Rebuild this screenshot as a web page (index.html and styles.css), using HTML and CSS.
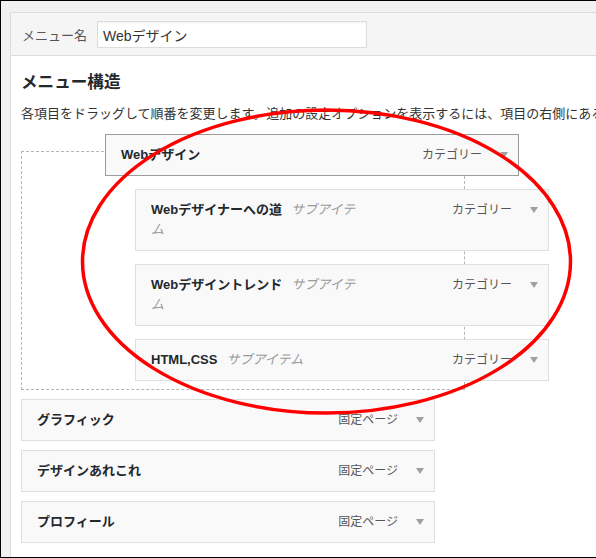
FILE: index.html
```html
<!DOCTYPE html>
<html lang="ja">
<head>
<meta charset="utf-8">
<title>メニュー構造</title>
<link rel="stylesheet" href="styles.css">
</head>
<body>
<div class="frame">
  <div class="panel">
    <div class="header">
      <span class="name-label">メニュー名</span>
      <input class="name-input" type="text" value="Webデザイン">
    </div>
    <div class="body">
      <h3 class="heading">メニュー構造</h3>
      <p class="desc">各項目をドラッグして順番を変更します。追加の設定オプションを表示するには、項目の右側にある矢印をクリックしてください。</p>
      <div class="menu">
        <div class="placeholder"></div>
        <div class="drag-helper">
          <div class="item helper">
            <div class="title-wrap"><span class="title">Webデザイン</span></div>
            <div class="controls"><span class="type">カテゴリー</span><span class="arrow"></span></div>
          </div>
          <div class="children">
            <div class="item">
              <div class="title-wrap narrow"><span class="title">Webデザイナーへの道</span><span class="sub">サブアイテム</span></div>
              <div class="controls"><span class="type">カテゴリー</span><span class="arrow"></span></div>
            </div>
            <div class="item">
              <div class="title-wrap narrow"><span class="title">Webデザイントレンド</span><span class="sub">サブアイテム</span></div>
              <div class="controls"><span class="type">カテゴリー</span><span class="arrow"></span></div>
            </div>
            <div class="item">
              <div class="title-wrap narrow"><span class="title">HTML,CSS</span><span class="sub">サブアイテム</span></div>
              <div class="controls"><span class="type">カテゴリー</span><span class="arrow"></span></div>
            </div>
          </div>
        </div>
        <div class="item">
          <div class="title-wrap"><span class="title">グラフィック</span></div>
          <div class="controls"><span class="type">固定ページ</span><span class="arrow"></span></div>
        </div>
        <div class="item">
          <div class="title-wrap"><span class="title">デザインあれこれ</span></div>
          <div class="controls"><span class="type">固定ページ</span><span class="arrow"></span></div>
        </div>
        <div class="item">
          <div class="title-wrap"><span class="title">プロフィール</span></div>
          <div class="controls"><span class="type">固定ページ</span><span class="arrow"></span></div>
        </div>
      </div>
    </div>
  </div>
  <svg class="annotation" width="596" height="558" viewBox="0 0 596 558">
    <ellipse cx="326.5" cy="261.5" rx="244" ry="151.5" fill="none" stroke="#ff0000" stroke-width="3.5"/>
  </svg>
</div>
</body>
</html>
```

FILE: styles.css
```css
* { box-sizing: border-box; }

html, body {
  margin: 0;
  padding: 0;
  background: #fff;
}

body {
  font-family: "Liberation Sans", "Noto Sans CJK JP", sans-serif;
  color: #333;
}

.frame {
  position: relative;
  width: 596px;
  height: 558px;
  border: 1px solid #000;
  border-right: none;
  background: #f1f1f1;
  padding: 11px 0 0 9px;
  display: flex;
  overflow: hidden;
}

.panel {
  flex: 1;
  background: #fff;
  border-top: 1px solid #dcdcdc;
  border-left: 1px solid #dcdcdc;
  display: flex;
  flex-direction: column;
  min-width: 0;
}

.header {
  height: 43px;
  background: #f5f5f5;
  border-bottom: 1px solid #dcdcdc;
  padding: 8px 11px 7px 11px;
  display: flex;
  align-items: center;
  gap: 11px;
}

.name-label {
  font-size: 13px;
  color: #555;
  width: 64px;
  white-space: nowrap;
}

.name-input {
  width: 270px;
  height: 27px;
  border: 1px solid #dcdcdc;
  background: #fff;
  padding: 0 5px;
  margin: 0;
  font-family: "Liberation Sans", "Noto Sans CJK JP", sans-serif;
  font-size: 14px;
  color: #333;
  box-shadow: inset 0 1px 2px rgba(0,0,0,0.06);
  outline: none;
}

.body {
  padding: 0 10px;
}

.heading {
  margin: 15px 0 0 0;
  font-size: 16.6px;
  line-height: 24px;
  font-weight: bold;
  color: #23282d;
}

.desc {
  margin: 9px 0 0 0;
  font-size: 13px;
  line-height: 20px;
  color: #333;
  white-space: nowrap;
}

.menu {
  position: relative;
  margin-top: 27px;
  display: flex;
  flex-direction: column;
  gap: 9px;
}

.placeholder {
  width: 444px;
  height: 239px;
  border: 1px dashed #b4b4b4;
}

.item {
  width: 414px;
  border: 1px solid #dfdfdf;
  background: #f9f9f9;
  padding: 10px 10px 10px 15px;
  line-height: 20px;
  display: flex;
  justify-content: space-between;
  align-items: flex-start;
}

.item.helper {
  border-color: #9c9c9c;
}

.drag-helper {
  position: absolute;
  left: 84px;
  top: -17px;
  display: flex;
  flex-direction: column;
  gap: 13px;
}

.children {
  margin-left: 30px;
  display: flex;
  flex-direction: column;
  gap: 13px;
}

.title-wrap {
  font-size: 13px;
}

.title-wrap.narrow {
  width: 214px;
}

.title {
  font-weight: bold;
  color: #23282d;
}

.sub {
  margin-left: 9px;
  font-style: italic;
  color: #999;
}

.controls {
  display: flex;
  align-items: center;
  height: 20px;
}

.type {
  font-size: 12px;
  color: #555;
  white-space: nowrap;
}

.arrow {
  margin-left: 18px;
  width: 0;
  height: 0;
  border-left: 4px solid transparent;
  border-right: 4px solid transparent;
  border-top: 6px solid #a0a0a0;
}

.annotation {
  position: absolute;
  left: -1px;
  top: -1px;
  pointer-events: none;
}
```
